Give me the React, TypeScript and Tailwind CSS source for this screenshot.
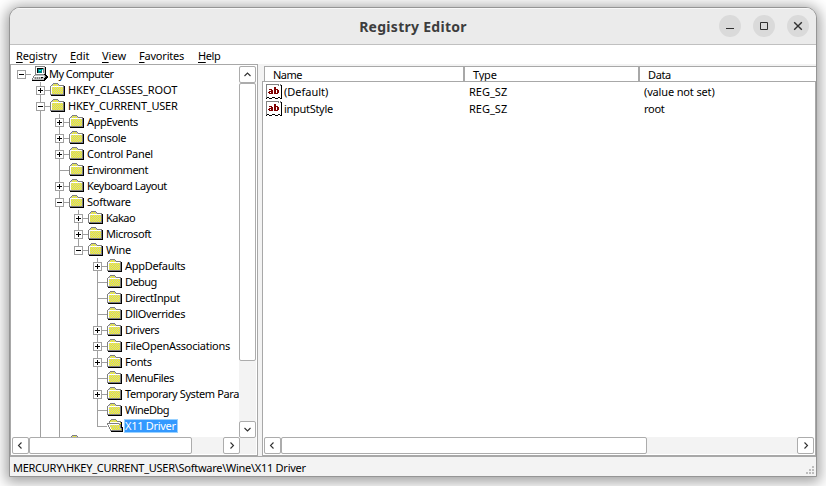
import React from "react";

type Palette = Record<string, string>;

const palette: Palette = {
  g: "#808080",
  k: "#000000",
  w: "#ffffff",
  y: "#ffff00",
  s: "#c0c0c0",
  t: "#008080",
  r: "#800000",
  c: "#00ffff",
};

function Pixmap({ rows }: { rows: string[] }) {
  const width = rows[0].length;
  return (
    <svg width={width} height={rows.length} viewBox={`0 0 ${width} ${rows.length}`} shapeRendering="crispEdges" className="block shrink-0">
      {rows.flatMap((row, y) =>
        row.split("").map((ch, x) =>
          palette[ch] ? <rect key={`${x}-${y}`} x={x} y={y} width="1" height="1" fill={palette[ch]} /> : null
        )
      )}
    </svg>
  );
}

const closedFolder = [
  ".................",
  "...ggggg.........",
  "..gsysysg........",
  ".gsysysysggggg...",
  "gwwwwwwwwwwwwgk..",
  "gwsysysysysysgk..",
  "gwysysysysysygk..",
  "gwsysysysysysgk..",
  "gwysysysysysygk..",
  "gwsysysysysysgk..",
  "gwysysysysysygk..",
  "gwsysysysysysgk..",
  "ggggggggggggggk..",
  ".kkkkkkkkkkkkkk..",
  ".................",
  ".................",
];

const openFolder = [
  ".................",
  "....ggggg........",
  "...gysysyg.......",
  "..gysysysygggg...",
  "..gwwwwwwwwwwgk..",
  "ggggggggggggsyk..",
  "gwwwwwwwwwwwggk..",
  ".gwsysysysysygk..",
  ".gwysysysysysgk..",
  "..gwsysysysysgkk.",
  "..gwysysysysysgk.",
  "...gwysysysysygk.",
  "...ggggggggggggk.",
  "....kkkkkkkkkkkk.",
  ".................",
  ".................",
];

const computer = [
  "....gggggggggg...",
  "....gwwwwwwwwsk..",
  "....gwkkkkkkgsk..",
  "....gwkttttcgsk..",
  "....gwktcctwgsk..",
  "....gwkttttwgsk..",
  "....gwkttttwgsk..",
  "....gwwwwwwwwsk..",
  "....gggggggggkk..",
  "...gsssssssssskk.",
  "..gwwwwwwwwwwsgkk",
  "..gsgsgsgskksskkk",
  ".gwsgsgsgsgsskkk.",
  ".gssssssssssskk..",
  ".kkkkkkkkkkkkk...",
  ".................",
];

const stringValue = [
  "ggggggggggggg.g.",
  "gwwwwwwwwwwwgwgk",
  "gwwwwwwwwwwwwwwk",
  "gwwwwwwwrrwwwwwk",
  "gwwwwwwwrrwwwwwk",
  "gwwrrrwwrrrrwwwk",
  "gwwwwrrwrrwrrwwk",
  "gwwrrrrwrrwrrwwk",
  "gwrrwrrwrrwrrwwk",
  "gwwrrrrwrrrrwwwk",
  "gwwwwwwwwwwwwwwk",
  "gwwwwwwwwwwwwwwk",
  "gwwwwwwwwwwwwwwk",
  "gkkwwwkkkwwwkkwk",
  "k..kkk...kkk..kk",
];

type Toggle = "plus" | "minus" | "none";
type Node = {
  label: string;
  guides: boolean[];
  toggle: Toggle;
  tracking: string;
  root?: boolean;
  last?: boolean;
  selected?: boolean;
};

const G1 = [false];
const G2 = [false, true];
const G3 = [false, true, true];
const G4 = [false, true, true, false];

const nodes: Node[] = [
  { label: "My Computer", guides: [], toggle: "minus", tracking: "tracking-[-0.55px]", root: true, last: true },
  { label: "HKEY_CLASSES_ROOT", guides: G1, toggle: "plus", tracking: "tracking-[-0.1px]" },
  { label: "HKEY_CURRENT_USER", guides: G1, toggle: "minus", tracking: "tracking-[-0.22px]" },
  { label: "AppEvents", guides: G2, toggle: "plus", tracking: "tracking-[-0.4px]" },
  { label: "Console", guides: G2, toggle: "plus", tracking: "tracking-[-0.3px]" },
  { label: "Control Panel", guides: G2, toggle: "plus", tracking: "tracking-[-0.3px]" },
  { label: "Environment", guides: G2, toggle: "none", tracking: "tracking-[-0.5px]" },
  { label: "Keyboard Layout", guides: G2, toggle: "plus", tracking: "tracking-[-0.47px]" },
  { label: "Software", guides: G2, toggle: "minus", tracking: "tracking-[-0.25px]" },
  { label: "Kakao", guides: G3, toggle: "plus", tracking: "tracking-[-0.5px]" },
  { label: "Microsoft", guides: G3, toggle: "plus", tracking: "tracking-[-0.4px]" },
  { label: "Wine", guides: G3, toggle: "minus", tracking: "tracking-[-0.25px]", last: true },
  { label: "AppDefaults", guides: G4, toggle: "plus", tracking: "tracking-[-0.3px]" },
  { label: "Debug", guides: G4, toggle: "none", tracking: "tracking-[-0.6px]" },
  { label: "DirectInput", guides: G4, toggle: "none", tracking: "tracking-[-0.35px]" },
  { label: "DllOverrides", guides: G4, toggle: "none", tracking: "tracking-[-0.35px]" },
  { label: "Drivers", guides: G4, toggle: "plus", tracking: "tracking-[-0.4px]" },
  { label: "FileOpenAssociations", guides: G4, toggle: "plus", tracking: "tracking-[-0.25px]" },
  { label: "Fonts", guides: G4, toggle: "plus", tracking: "tracking-[-0.35px]" },
  { label: "MenuFiles", guides: G4, toggle: "none", tracking: "tracking-[-0.42px]" },
  { label: "Temporary System Para", guides: G4, toggle: "plus", tracking: "tracking-[-0.4px]" },
  { label: "WineDbg", guides: G4, toggle: "none", tracking: "tracking-[-0.5px]" },
  { label: "X11 Driver", guides: G4, toggle: "none", tracking: "tracking-[-0.3px]", last: true, selected: true },
  { label: "", guides: G2, toggle: "none", tracking: "" },
];

function Expander({ toggle, root, last }: { toggle: Toggle; root?: boolean; last?: boolean }) {
  return (
    <svg width="19" height="16" viewBox="0 0 19 16" shapeRendering="crispEdges" className="block shrink-0">
      {!root && <rect x="9" y="0" width="1" height={last ? 9 : 16} fill="#a0a0a0" />}
      <rect x="9" y="8" width="10" height="1" fill="#a0a0a0" />
      {toggle !== "none" && (
        <>
          <rect x="5" y="4" width="9" height="9" fill="#a0a0a0" />
          <rect x="6" y="5" width="7" height="7" fill="#fff" />
          <rect x="7" y="8" width="5" height="1" fill="#000" />
          {toggle === "plus" && <rect x="9" y="6" width="1" height="5" fill="#000" />}
        </>
      )}
    </svg>
  );
}

function TreeRow({ node }: { node: Node }) {
  return (
    <div className="flex h-4 shrink-0 items-center">
      {node.guides.map((on, i) => (
        <div key={i} className="flex h-4 w-[19px] shrink-0 justify-center">
          {on && <div className="h-4 w-px bg-[#a0a0a0]" />}
        </div>
      ))}
      <Expander toggle={node.toggle} root={node.root} last={node.last} />
      <Pixmap rows={node.root ? computer : node.selected ? openFolder : closedFolder} />
      <div
        className={
          node.selected
            ? "h-[14px] w-[54px] shrink-0 border border-[#99d1ff] bg-[#3399ff] leading-[12px] tracking-[-0.3px] whitespace-nowrap text-white"
            : `shrink-0 pl-px leading-4 whitespace-nowrap ${node.tracking}`
        }
      >
        {node.label}
      </div>
    </div>
  );
}

const arrows = {
  up: "M5.5 10 8.5 7 11.5 10",
  down: "M5.5 7 8.5 10 11.5 7",
  left: "M9.5 5.5 6.5 8.5 9.5 11.5",
  right: "M7.5 5.5 10.5 8.5 7.5 11.5",
};

function ArrowButton({ dir }: { dir: keyof typeof arrows }) {
  return (
    <div className="size-[17px] shrink-0 rounded-[2px] border border-[#acacac] bg-white">
      <svg width="17" height="17" viewBox="0 0 17 17" className="-mt-px -ml-px block">
        <path d={arrows[dir]} fill="none" stroke="#303030" strokeWidth="1.1" />
      </svg>
    </div>
  );
}

function HScroll({ thumb }: { thumb: string }) {
  return (
    <div className="flex h-[17px] grow bg-[#f3f3f3]">
      <ArrowButton dir="left" />
      <div className={`${thumb} rounded-[2px] border border-[#acacac] bg-white`} />
      <div className="grow" />
      <ArrowButton dir="right" />
    </div>
  );
}

function TitleButton({ children }: { children: React.ReactNode }) {
  return (
    <div className="size-[22px] rounded-full bg-[#dadada]">
      <svg width="22" height="22" viewBox="0 0 22 22" fill="none" stroke="#303030" className="block">
        {children}
      </svg>
    </div>
  );
}

const menus = [
  { label: "Registry", style: "w-[54px] tracking-[-0.15px]" },
  { label: "Edit", style: "w-[32px] tracking-[-0.1px]" },
  { label: "View", style: "w-[37px]" },
  { label: "Favorites", style: "w-[59px] tracking-[-0.2px]" },
  { label: "Help", style: "w-[30px] tracking-[-0.4px]" },
];

const values = [
  { name: "(Default)", type: "REG_SZ", data: "(value not set)", nameTracking: "", dataTracking: "tracking-[-0.15px]" },
  { name: "inputStyle", type: "REG_SZ", data: "root", nameTracking: "tracking-[-0.3px]", dataTracking: "tracking-[-0.3px]" },
];

export default function App() {
  return (
    <div className="h-[486px] w-[826px] overflow-hidden bg-white pt-[7px] pl-[9px] font-['Noto_Sans','DejaVu_Sans',sans-serif] text-[11px] text-black">
      <div className="flex h-[470px] w-[808px] flex-col overflow-hidden rounded-t-[11px] border border-[#959595] bg-white shadow-[0_2px_14px_3px_rgba(0,0,0,0.38)]">
        <div className="flex h-[37px] shrink-0 items-center border-b border-[#c0c0c0] bg-[#ebebeb] shadow-[inset_0_1px_0_#f8f8f8]">
          <div className="w-[102px]" />
          <div className="grow text-center text-[14px] font-bold tracking-[0.28px] text-[#3d3d3d]">Registry Editor</div>
          <div className="flex w-[102px] gap-3 pb-px pl-[5px]">
            <TitleButton>
              <path d="M7 13.5h8" />
            </TitleButton>
            <TitleButton>
              <path d="M7.5 7.5h7v7h-7z" />
            </TitleButton>
            <TitleButton>
              <path d="M7.2 7.2l7.6 7.6M14.8 7.2l-7.6 7.6" strokeWidth="1.4" />
            </TitleButton>
          </div>
        </div>

        <div className="flex h-[19px] shrink-0 items-center pt-[3px] pl-[6px] leading-4">
          {menus.map((m) => (
            <div key={m.label} className={`${m.style} whitespace-nowrap`}>
              <span className="underline underline-offset-2">{m.label[0]}</span>
              {m.label.slice(1)}
            </div>
          ))}
        </div>

        <div className="flex h-[392px] shrink-0 bg-[#f3f3f3]">
          <div className="flex w-[248px] shrink-0 flex-col border border-[#a8a8a8] bg-white p-px">
            <div className="flex h-[371px] shrink-0">
              <div className="flex w-[227px] shrink-0 flex-col overflow-hidden">
                {nodes.map((n, i) => (
                  <TreeRow key={i} node={n} />
                ))}
              </div>
              <div className="relative z-10 flex h-[372px] w-[17px] shrink-0 flex-col bg-[#f3f3f3]">
                <ArrowButton dir="up" />
                <div className="h-[278px] rounded-[2px] border border-[#acacac] bg-white" />
                <div className="grow" />
                <ArrowButton dir="down" />
              </div>
            </div>
            <div className="flex bg-[#f3f3f3] pr-4">
              <HScroll thumb="w-[163px]" />
            </div>
          </div>

          <div className="flex grow flex-col pt-[2px] pl-1">
            <div className="ml-[2px] flex h-[15px] shrink-0 border-t border-l border-[#a8a8a8] bg-white leading-[16px]">
              <div className="w-[200px] border-r-2 border-[#a8a8a8] pl-2 tracking-[-0.5px]">Name</div>
              <div className="w-[175px] border-r-2 border-[#a8a8a8] pl-2 tracking-[-0.2px]">Type</div>
              <div className="pl-2 tracking-[-0.4px]">Data</div>
            </div>
            <div className="flex grow flex-col border border-[#a8a8a8] bg-white p-px">
              <div className="grow">
                {values.map((v) => (
                  <div key={v.name} className="flex h-[17px] items-center pl-[2px] leading-[17px]">
                    <Pixmap rows={stringValue} />
                    <div className={`w-[185px] pl-[2px] ${v.nameTracking}`}>{v.name}</div>
                    <div className="w-[175px] pl-[2px]">{v.type}</div>
                    <div className={`pl-[2px] ${v.dataTracking}`}>{v.data}</div>
                  </div>
                ))}
              </div>
              <div className="flex shrink-0">
                <HScroll thumb="w-[366px]" />
              </div>
            </div>
          </div>
        </div>

        <div className="flex grow items-end justify-between border-t border-[#a8a8a8] bg-[#f3f3f3] pl-[3px]">
          <div className="self-center pt-[2px] leading-4 tracking-[-0.27px] whitespace-nowrap">MERCURY\HKEY_CURRENT_USER\Software\Wine\X11 Driver</div>
          <svg width="9" height="9" viewBox="0 0 9 9" shapeRendering="crispEdges" fill="#bdbdbd" className="mr-px mb-px block">
            <path d="M6 0h2v2H6zM3 3h2v2H3zM6 3h2v2H6zM0 6h2v2H0zM3 6h2v2H3zM6 6h2v2H6z" />
          </svg>
        </div>
      </div>
    </div>
  );
}
